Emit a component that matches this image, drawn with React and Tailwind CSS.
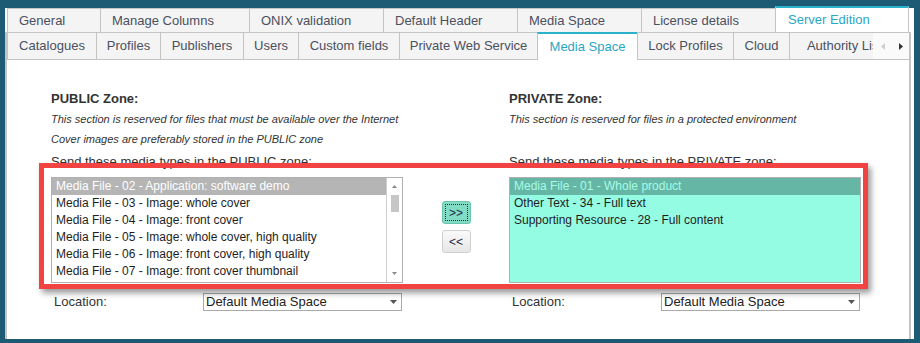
const FONT = "font-['Liberation_Sans',Arial,sans-serif]";

const row1 = [
  { label: "General", w: "w-[93px]" },
  { label: "Manage Columns", w: "w-[149px]" },
  { label: "ONIX validation", w: "w-[134px]" },
  { label: "Default Header", w: "w-[134px]" },
  { label: "Media Space", w: "w-[124px]" },
  { label: "License details", w: "w-[134px]" },
];

const row2 = [
  { label: "Catalogues", w: "w-[89px]" },
  { label: "Profiles", w: "w-[64px]" },
  { label: "Publishers", w: "w-[83px]" },
  { label: "Users", w: "w-[55px]" },
  { label: "Custom fields", w: "w-[101px]" },
  { label: "Private Web Service", w: "w-[138px]" },
  { label: "Media Space", w: "w-[100px]", active: true },
  { label: "Lock Profiles", w: "w-[96px]" },
  { label: "Cloud", w: "w-[56px]" },
  { label: "Authority List", w: "w-[110px]" },
];

const publicItems = [
  "Media File - 02 - Application: software demo",
  "Media File - 03 - Image: whole cover",
  "Media File - 04 - Image: front cover",
  "Media File - 05 - Image: whole cover, high quality",
  "Media File - 06 - Image: front cover, high quality",
  "Media File - 07 - Image: front cover thumbnail",
];

const privateItems = [
  "Media File - 01 - Whole product",
  "Other Text - 34 - Full text",
  "Supporting Resource - 28 - Full content",
];

function Select() {
  return (
    <div className="w-[199px] h-[18px] border border-[#a9a9a9] bg-white flex items-center justify-between pl-[2px] pr-[4px] text-[13px] text-[#222]">
      <span className="leading-[16px]">Default Media Space</span>
      <svg width="7" height="4" viewBox="0 0 7 4">
        <polygon points="0,0 7,0 3.5,4" fill="#555" />
      </svg>
    </div>
  );
}

function LocationRow() {
  return (
    <div className="mt-[10px] flex items-center h-[18px]">
      <div className="w-[152px] pl-[3px] text-[13px] text-[#333] leading-[18px]">Location:</div>
      <Select />
    </div>
  );
}

export default function App() {
  return (
    <div className={`${FONT} relative w-[920px] h-[343px] bg-[#1d5a73] pt-[8px] pl-[5px] overflow-hidden`}>
      <div className="w-[909px] h-[331px] bg-white">
        {/* Row 1 tabs */}
        <div className="flex items-end h-[24px] pl-[2px]">
          {row1.map((t) => (
            <div
              key={t.label}
              className={`${t.w} h-[24px] shrink-0 border-t border-l border-[#c4c4c4] bg-[#f4f4f4] flex items-center pl-[11px] text-[13px] text-[#4a5060]`}
            >
              {t.label}
            </div>
          ))}
          <div className="w-[134px] h-[26px] shrink-0 border-t-2 border-t-[#29b2ca] border-l border-r border-l-[#c4c4c4] border-r-[#c4c4c4] bg-white flex items-center pl-[12px] text-[13px] text-[#2aa6c4]">
            Server Edition
          </div>
        </div>

        {/* Panel */}
        <div className="w-[906px] h-[307px] border-l-2 border-r-2 border-[#c4c4c4] flex flex-col">
          {/* Row 2 tabs */}
          <div className="flex h-[28px] shrink-0">
            <div className="w-[866px] overflow-hidden flex">
              {row2.map((t) =>
                t.active ? (
                  <div
                    key={t.label}
                    className={`${t.w} h-[28px] shrink-0 border-t-2 border-t-[#29b2ca] border-l border-l-[#c4c4c4] bg-white flex items-center justify-center text-[13px] text-[#2aa6c4]`}
                  >
                    {t.label}
                  </div>
                ) : (
                  <div
                    key={t.label}
                    className={`${t.w} h-[28px] shrink-0 border-t border-b border-l border-[#c4c4c4] bg-[#f4f4f4] flex items-center justify-center text-[13px] text-[#4a5060]`}
                  >
                    {t.label}
                  </div>
                )
              )}
            </div>
            <div className="w-[36px] h-[28px] shrink-0 border-t border-b border-[#c4c4c4] bg-[#fafafa] flex items-center pl-[8px] gap-[14px]">
              <svg width="4" height="7" viewBox="0 0 4 7">
                <polygon points="4,0 4,7 0,3.5" fill="#cfcfcf" />
              </svg>
              <svg width="4" height="7" viewBox="0 0 4 7">
                <polygon points="0,0 0,7 4,3.5" fill="#333" />
              </svg>
            </div>
          </div>

          {/* Content */}
          <div className="flex-1 pl-[44px] pt-[29px] text-[#333]">
            <div className="grid grid-cols-[352px_106px_352px] items-start">
              {/* PUBLIC */}
              <div className="flex flex-col">
                <div className="text-[13px] font-bold leading-[20px]">PUBLIC Zone:</div>
                <div className="text-[11px] italic leading-[20px]">
                  This section is reserved for files that must be available over the Internet
                </div>
                <div className="text-[11px] italic leading-[20px]">
                  Cover images are preferably stored in the PUBLIC zone
                </div>
                <div className="mt-[3px] text-[13px] leading-[20px]">Send these media types in the PUBLIC zone:</div>
                <div className="mt-[5px] h-[106px] border border-[#b0b0b0] bg-white flex">
                  <div className="flex-1 pt-0">
                    {publicItems.map((it, i) => (
                      <div
                        key={it}
                        className={
                          i === 0
                            ? "h-[17px] leading-[17px] pl-[4px] text-[12px] bg-[#b5b5b5] text-white"
                            : "h-[17px] leading-[17px] pl-[4px] text-[12px] text-[#1e1e1e]"
                        }
                      >
                        {it}
                      </div>
                    ))}
                  </div>
                  <div className="w-[16px] border-l border-[#cfcfcf] flex flex-col items-center pt-[7px] pb-[7px]">
                    <svg width="5" height="3" viewBox="0 0 5 3">
                      <polygon points="0,3 5,3 2.5,0" fill="#8a8a8a" />
                    </svg>
                    <div className="mt-[7px] w-[8px] h-[17px] bg-[#c6c6c6]" />
                    <div className="flex-1" />
                    <svg width="5" height="3" viewBox="0 0 5 3">
                      <polygon points="0,0 5,0 2.5,3" fill="#8a8a8a" />
                    </svg>
                  </div>
                </div>
                <LocationRow />
              </div>

              {/* Buttons */}
              <div className="pt-[112px] flex flex-col items-center gap-[6px]">
                <div className="w-[29px] h-[23px] rounded-[3px] border border-[#6cc4ac] bg-[#80dcc4] p-[2px]">
                  <div className="w-full h-full border border-dotted border-[#222] flex items-center justify-center text-[12px] leading-none text-[#1f2a44]">
                    &gt;&gt;
                  </div>
                </div>
                <div className="w-[29px] h-[23px] rounded-[3px] border border-[#cfcfcf] bg-gradient-to-b from-[#fafafa] to-[#e6e6e6] flex items-center justify-center text-[12px] leading-none text-[#1f2a44]">
                  &lt;&lt;
                </div>
              </div>

              {/* PRIVATE */}
              <div className="flex flex-col">
                <div className="text-[13px] font-bold leading-[20px]">PRIVATE Zone:</div>
                <div className="text-[11px] italic leading-[20px]">
                  This section is reserved for files in a protected environment
                </div>
                <div className="h-[20px]" />
                <div className="mt-[3px] text-[13px] leading-[20px]">Send these media types in the PRIVATE zone:</div>
                <div className="mt-[5px] h-[106px] border border-[#b0b0b0] bg-[#95fce4]">
                  {privateItems.map((it, i) => (
                    <div
                      key={it}
                      className={
                        i === 0
                          ? "h-[17px] leading-[17px] pl-[4px] text-[12px] bg-[#65b6a4] text-[#a6fbe8]"
                          : "h-[17px] leading-[17px] pl-[4px] text-[12px] text-[#1e1e1e]"
                      }
                    >
                      {it}
                    </div>
                  ))}
                </div>
                <LocationRow />
              </div>
            </div>
          </div>
        </div>
      </div>

      {/* Red annotation overlay */}
      <div className="absolute left-[39px] top-[163px] w-[829px] h-[126px] border-[5px] border-[#f24343] shadow-[3px_4px_6px_rgba(0,0,0,0.4)] pointer-events-none" />
    </div>
  );
}
